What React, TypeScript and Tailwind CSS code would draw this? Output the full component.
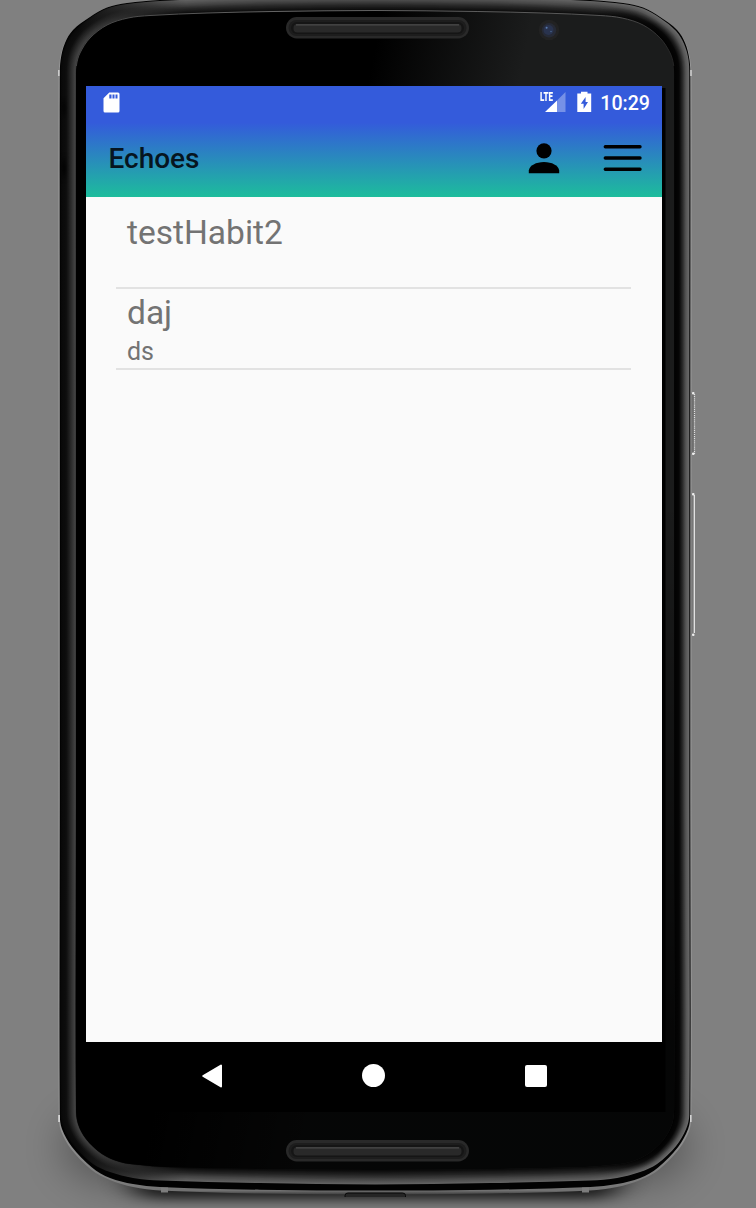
import React from 'react';

type Pt = [number, number];

const CENTER = 375.5;

/* Left halves of each contour, listed from top centre to bottom centre. */
const RIM_OUTER: Pt[] = [
  [375, -4], [260, -3], [160, 1], [127, 4], [107, 8.5], [90, 18], [74, 31], [66, 44], [61.5, 60], [60.8, 80],
  [60.8, 400], [60.8, 800], [60.8, 1115], [64, 1129], [74, 1146], [93, 1164], [110, 1172], [133, 1178], [160, 1180.5], [260, 1183], [375, 1184.5],
];
const RIM_INNER: Pt[] = [
  [375, 10.5], [273, 11.5], [207, 13], [150, 15.5], [128, 18], [107, 25], [90, 38], [80, 53], [76.5, 65], [76, 80],
  [76, 400], [76, 800], [76, 1108], [78, 1124], [86, 1139], [102, 1154], [120, 1162], [140, 1165], [165, 1167], [260, 1169], [375, 1170],
];
const EDGE: Pt[] = [
  [375, -6], [260, -5], [160, 0], [127, 3], [107, 7.5], [90, 17], [73, 30], [65, 43], [60.6, 60], [59.8, 80],
  [59.8, 400], [59.8, 800], [59.8, 1115], [62, 1129], [72, 1147], [92, 1167.5], [110, 1178], [133, 1184], [160, 1187], [260, 1189.7], [375, 1190.5],
];
const SILVER: Pt[] = [
  [375, -6], [260, -5], [160, 0], [127, 3], [107, 7.5], [90, 17], [73, 30], [64.6, 43], [59.8, 60], [58.6, 80],
  [58.6, 400], [58.6, 800], [58.8, 1117], [61, 1131], [71, 1149], [91, 1169.5], [110, 1180], [133, 1187], [160, 1190.5], [260, 1193.5], [375, 1194.5],
];

const f = (n: number) => n.toFixed(2);

function contour(half: Pt[]): string {
  const right = half.slice(1, -1).reverse().map(([x, y]): Pt => [2 * CENTER - x - 0.9, y]);
  const pts = [...half, ...right];
  const n = pts.length;
  let d = `M${f(pts[0][0])} ${f(pts[0][1])}`;
  for (let i = 0; i < n; i++) {
    const a = pts[(i + n - 1) % n];
    const b = pts[i];
    const c = pts[(i + 1) % n];
    const e = pts[(i + 2) % n];
    const len = Math.hypot(c[0] - b[0], c[1] - b[1]);
    const l1 = Math.hypot(c[0] - a[0], c[1] - a[1]) || 1;
    const l2 = Math.hypot(e[0] - b[0], e[1] - b[1]) || 1;
    const k = len / 3;
    d += `C${f(b[0] + ((c[0] - a[0]) / l1) * k)} ${f(b[1] + ((c[1] - a[1]) / l1) * k)} ${f(c[0] - ((e[0] - b[0]) / l2) * k)} ${f(c[1] - ((e[1] - b[1]) / l2) * k)} ${f(c[0])} ${f(c[1])}`;
  }
  return d + 'Z';
}

const mix = (a: Pt[], b: Pt[], t: number): Pt[] =>
  a.map(([x, y], i): Pt => [x + (b[i][0] - x) * t, y + (b[i][1] - y) * t]);

function ramp(stops: Pt[], t: number): string {
  let v = stops[stops.length - 1][1];
  for (let i = 0; i < stops.length - 1; i++) {
    const [t0, v0] = stops[i];
    const [t1, v1] = stops[i + 1];
    if (t <= t1) {
      v = v0 + ((v1 - v0) * (t - t0)) / (t1 - t0);
      break;
    }
  }
  const g = Math.round(v);
  return `rgb(${g},${g},${g})`;
}

const LAYERS = Array.from({ length: 20 }, (_, i) => i / 20);
const LEFT: Pt[] = [[0, 8], [0.35, 14], [0.65, 42], [0.9, 66], [1, 48]];
const MIDDLE: Pt[] = [[0, 98], [0.3, 72], [0.6, 38], [1, 6]];
const RIGHT: Pt[] = [[0, 105], [0.2, 85], [0.45, 36], [0.65, 6], [1, 0]];

function Grille({ y }: { y: number }) {
  return (
    <g>
      <rect x="286" y={y} width="183" height="21.5" rx="10.7" fill="#292929" />
      <rect x="288.5" y={y + 3} width="178" height="16" rx="8" fill="#1d1d1d" />
      <rect x="291" y={y + 5} width="173" height="12" rx="6" fill="#151515" />
      <rect x="293.5" y={y + 7} width="168" height="8.5" rx="4" fill="#292929" />
      <path d={`M296 ${y + 7.8}H459`} stroke="#4a4a4a" strokeWidth="1.2" />
    </g>
  );
}

function Device() {
  return (
    <svg className="absolute inset-0" width="756" height="1208" viewBox="0 0 756 1208" aria-hidden="true">
      <defs>
        {LAYERS.map((t, i) => (
          <linearGradient key={i} id={`rim${i}`} gradientUnits="userSpaceOnUse" x1="60" y1="0" x2="690" y2="0">
            <stop offset="0.03" stopColor={ramp(LEFT, t)} />
            <stop offset="0.2" stopColor={ramp(MIDDLE, t)} />
            <stop offset="0.85" stopColor={ramp(MIDDLE, t)} />
            <stop offset="0.95" stopColor={ramp(RIGHT, t)} />
          </linearGradient>
        ))}
        <linearGradient id="glass" gradientUnits="userSpaceOnUse" x1="385" y1="0" x2="530" y2="30">
          <stop offset="0" stopColor="#000" />
          <stop offset="1" stopColor="#1b1c1c" />
        </linearGradient>
        <linearGradient id="fade" gradientUnits="userSpaceOnUse" x1="0" y1="500" x2="0" y2="1040">
          <stop offset="0" stopColor="#000" stopOpacity="0" />
          <stop offset="1" stopColor="#000" stopOpacity="0.8" />
        </linearGradient>
        <linearGradient id="shine" gradientUnits="userSpaceOnUse" x1="76" y1="0" x2="675" y2="0">
          <stop offset="0" stopColor="#444" />
          <stop offset="0.35" stopColor="#666" />
          <stop offset="0.9" stopColor="#555" />
          <stop offset="1" stopColor="#222" />
        </linearGradient>
        <linearGradient id="silver" gradientUnits="userSpaceOnUse" x1="0" y1="1120" x2="0" y2="1195">
          <stop offset="0" stopColor="#979797" />
          <stop offset="0.85" stopColor="#7b7b7b" />
          <stop offset="0.94" stopColor="#717171" />
          <stop offset="1" stopColor="#363636" />
        </linearGradient>
        <filter id="soft" x="-20%" y="-50%" width="140%" height="200%">
          <feGaussianBlur stdDeviation="15 6" />
        </filter>
        <filter id="wide" x="-20%" y="-50%" width="140%" height="200%">
          <feGaussianBlur stdDeviation="20" />
        </filter>
        <filter id="smudge" x="-200%" y="-50%" width="500%" height="200%">
          <feGaussianBlur stdDeviation="1.5 5" />
        </filter>
        <clipPath id="topEdge"><rect x="60" y="0" width="632" height="66" /></clipPath>
      </defs>

      <rect x="62" y="1110" width="627" height="74" rx="60" fill="#000" opacity="0.32" filter="url(#wide)" />
      <rect x="130" y="1150" width="490" height="49" rx="20" fill="#000" opacity="0.75" filter="url(#soft)" />

      <path d={contour(SILVER)} fill="url(#silver)" />
      <path d={contour(EDGE)} fill="#020202" />
      {LAYERS.map((t, i) => (
        <path key={i} d={contour(mix(RIM_OUTER, RIM_INNER, t))} fill={`url(#rim${i})`} />
      ))}
      <ellipse cx="64" cy="108" rx="2.5" ry="6" fill="#000" opacity="0.7" filter="url(#smudge)" />
      <ellipse cx="64" cy="168" rx="2.5" ry="8" fill="#000" opacity="0.8" filter="url(#smudge)" />

      <path d={contour(RIM_INNER)} fill="url(#glass)" />
      <path d={contour(RIM_INNER)} fill="url(#fade)" />
      <path d={contour(RIM_INNER)} fill="none" stroke="url(#shine)" strokeWidth="1" clipPath="url(#topEdge)" />
      <rect x="662" y="88" width="3.5" height="1024" fill="#000" />
      <rect x="86" y="1042" width="579" height="70" fill="#000" />

      <rect x="58" y="70" width="1.6" height="6" fill="#ccc" />
      <rect x="690.2" y="70" width="1.6" height="6" fill="#ccc" />
      <rect x="58.2" y="1115" width="1.8" height="7" fill="#d4d4d4" />
      <rect x="690" y="1115" width="1.6" height="7" fill="#d4d4d4" />

      <rect x="691.5" y="393" width="3" height="61" fill="#6f6f6f" />
      <path d="M694.500 394V454" stroke="#e0e0e0" strokeWidth="1.2" strokeDasharray="1.2 0.9" />
      <rect x="692" y="392" width="2.5" height="2.5" rx="1" fill="#eee" />
      <rect x="692" y="452.5" width="2.5" height="2.5" rx="1" fill="#eee" />
      <rect x="691.5" y="494" width="3" height="141" fill="#777" />
      <path d="M694.300 495V633" stroke="#eee" strokeWidth="1.2" />
      <rect x="692" y="493" width="2.5" height="2.5" rx="1" fill="#eee" />
      <rect x="692" y="633.5" width="2.5" height="2.5" rx="1" fill="#eee" />

      <Grille y={17} />
      <Grille y={1140} />

      <circle cx="549" cy="30" r="10.3" fill="#222" />
      <circle cx="549" cy="30.3" r="7.2" fill="#262a36" />
      <circle cx="548.5" cy="30" r="5" fill="#29334e" />
      <circle cx="546.6" cy="27.8" r="1" fill="#5b7cae" />
      <circle cx="551" cy="31.5" r="0.8" fill="#46618c" />

      <rect x="161" y="1187.5" width="7" height="5" fill="#7d7d7d" />
      <rect x="582" y="1187.5" width="7" height="5" fill="#7d7d7d" />
      <path d="M345 1197V1195.500Q345 1193 348 1193H402.500Q405.500 1193 405.500 1195.500V1197Z" fill="#252525" />
      <path d="M345 1197V1195.500Q345 1193 348 1193H402.500Q405.500 1193 405.500 1195.500V1197" fill="none" stroke="#080808" />
    </svg>
  );
}

function SdCard() {
  return (
    <svg width="17" height="21" viewBox="0 0 17 21" aria-hidden="true">
      <path fill="#fff" fillRule="evenodd" d="M6.300 .5H15Q16.500 .5 16.500 2V19Q16.500 20.500 15 20.500H2Q.5 20.500 .5 19V6.300ZM6.300 2.600V6.600H8.500V2.600ZM9.500 2.600V6.600H11.500V2.600ZM12.500 2.600V6.600H14.500V2.600Z" />
    </svg>
  );
}

function StatusBar() {
  return (
    <header className="flex h-[37px] items-start justify-between pl-[16.500px] pr-[12px]">
      <div className="pt-[5.500px]">
        <SdCard />
      </div>
      <div className="flex items-start text-white">
        <span className="w-[5px] origin-left scale-x-[0.66] pt-[5px] text-[12px] font-black leading-[12px]">LTE</span>
        <svg className="mt-[6px]" width="21" height="20" viewBox="0 0 21 20" aria-hidden="true">
          <path d="M20.500 0V20H12V8.500Z" fill="#fff" opacity="0.33" />
          <path d="M0 20 12 8.500V20Z" fill="#fff" />
        </svg>
        <svg className="ml-[11px] mt-[5px]" width="15" height="21" viewBox="0 0 15 21" aria-hidden="true">
          <path fill="#fff" fillRule="evenodd" d="M4 .7H10.500V2.500H14.200V21H.3V2.500H4ZM8.600 6 3.800 12.800H6.600V18L11 11H8.600Z" />
        </svg>
        <time className="ml-[8.500px] pt-[6px] text-[19.600px] font-medium leading-[24px]">10:29</time>
      </div>
    </header>
  );
}

function AppBar() {
  return (
    <nav className="flex h-[74px] items-center justify-between pl-[22.500px] pr-[20px]">
      <h1 className="pb-[2px] text-[28px] font-medium leading-[32px] text-[#061520]">Echoes</h1>
      <div className="flex items-center gap-[43px]">
        <button type="button" aria-label="Profile">
          <svg className="mb-[5px] block" width="32" height="32" viewBox="0 0 32 32" aria-hidden="true">
            <circle cx="16" cy="8.800" r="7.600" />
            <path d="M.8 31.200V28.500C1.500 23.500 8 20 16 20S30.500 23.500 31.200 28.500V31.200Z" />
          </svg>
        </button>
        <button type="button" aria-label="Menu">
          <svg className="mb-[4px] block" width="39" height="28" viewBox="0 0 39 28" aria-hidden="true">
            <path d="M2.300 2.700H37M2.300 14H37M2.300 25.200H37" stroke="#000" strokeWidth="3.400" strokeLinecap="round" />
          </svg>
        </button>
      </div>
    </nav>
  );
}

const habits = [
  { name: 'testHabit2', note: '' },
  { name: 'daj', note: 'ds' },
];

export default function App() {
  return (
    <div className="relative h-[1208px] w-[756px] overflow-hidden bg-[#808080] pl-[86px] pt-[86px] font-['Roboto',sans-serif]">
      <Device />
      <div className="relative flex h-[1026px] w-[576px] flex-col">
        <div className="bg-[linear-gradient(to_bottom,#345bdb_33%,#1dbd9c)]">
          <StatusBar />
          <AppBar />
        </div>
        <main className="flex-1 bg-[#fafafa] px-[30px] pt-[12px] text-[#737373]">
          {habits.map((h) => (
            <section key={h.name} className="mr-px h-[80.400px] border-b-2 border-[#e2e2e2] pl-[11px] pt-[3px]">
              <h2 className="text-[33.500px] leading-[41px]">{h.name}</h2>
              <p className="text-[25px] leading-[37px]">{h.note}</p>
            </section>
          ))}
        </main>
        <footer className="flex h-[70px] items-start bg-black pl-[115px] pt-[21px]">
          <svg width="22" height="26" viewBox="0 0 22 26" aria-hidden="true">
            <path d="M2.200 13 20 2.500V23.500Z" fill="#fff" stroke="#fff" strokeWidth="2" strokeLinejoin="round" />
          </svg>
          <span className="ml-[139px] mt-[1px] h-[23px] w-[23px] rounded-full bg-white" />
          <span className="ml-[140px] mt-[2px] h-[22px] w-[22px] rounded-[2px] bg-white" />
        </footer>
      </div>
    </div>
  );
}
